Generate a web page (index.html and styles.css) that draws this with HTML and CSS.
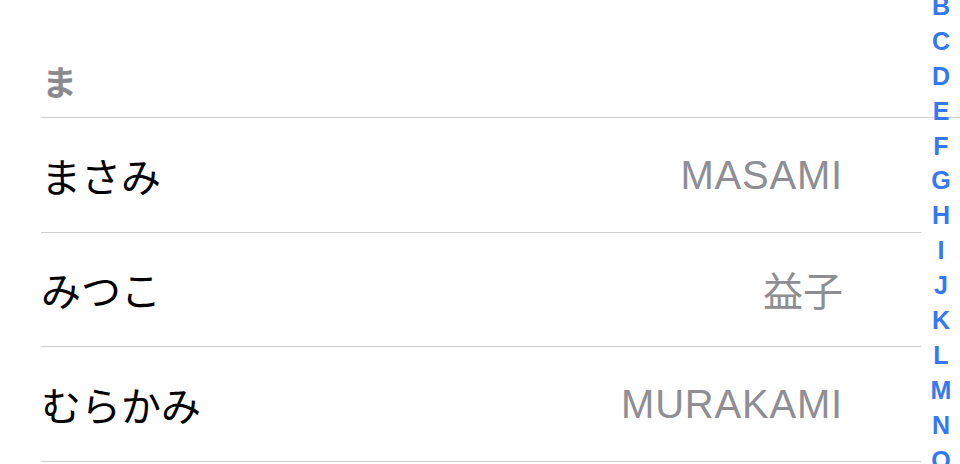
FILE: index.html
```html
<!DOCTYPE html>
<html lang="ja">
<head>
    <meta charset="UTF-8">
    <meta name="viewport" content="width=device-width, initial-scale=1.0">
    <title>連絡先</title>
    <link rel="stylesheet" href="styles.css">
</head>
<body>
    <div class="screen">
        <div class="list">
            <div class="section-header">ま</div>
            <div class="row">
                <span class="name">まさみ</span>
                <span class="detail">MASAMI</span>
            </div>
            <div class="row">
                <span class="name">みつこ</span>
                <span class="detail detail-kanji">益子</span>
            </div>
            <div class="row">
                <span class="name">むらかみ</span>
                <span class="detail">MURAKAMI</span>
            </div>
        </div>

        <ul class="index">
            <li>B</li>
            <li>C</li>
            <li>D</li>
            <li>E</li>
            <li>F</li>
            <li>G</li>
            <li>H</li>
            <li>I</li>
            <li>J</li>
            <li>K</li>
            <li>L</li>
            <li>M</li>
            <li>N</li>
            <li>O</li>
        </ul>
    </div>
</body>
</html>
```

FILE: styles.css
```css
body {
    margin: 0;
    padding: 0;
    background: #ffffff;
    font-family: "Liberation Sans", "Noto Sans CJK JP", sans-serif;
    overflow: hidden;
}
.screen {
    position: relative;
    width: 960px;
    height: 464px;
    overflow: hidden;
}
.list {
    padding-left: 41px;
}
.section-header {
    height: 118px;
    display: flex;
    align-items: flex-end;
    box-sizing: border-box;
    padding-bottom: 18px;
    padding-left: 1px;
    border-bottom: 1px solid #cfcfd3;
    font-family: "Noto Sans CJK JP", sans-serif;
    font-weight: bold;
    font-size: 35px;
    line-height: 36px;
    color: #8a8a8e;
}
.row {
    height: 114.5px;
    box-sizing: border-box;
    margin-right: 39px;
    padding-right: 78px;
    display: flex;
    align-items: center;
    justify-content: space-between;
    border-bottom: 1px solid #cfcfd3;
}
.name {
    font-family: "Noto Sans CJK JP", sans-serif;
    font-size: 40px;
    color: #000000;
}
.detail {
    font-family: "Liberation Sans", sans-serif;
    font-size: 40px;
    color: #8e8e93;
    letter-spacing: 0.8px;
    padding-top: 2px;
}
.detail-kanji {
    font-family: "Noto Sans CJK JP", sans-serif;
    font-size: 40px;
    letter-spacing: 0;
    padding-top: 0;
}
.index {
    position: absolute;
    top: -11px;
    right: 0;
    width: 38px;
    margin: 0;
    padding: 0;
    list-style: none;
    text-align: center;
}
.index li {
    height: 34.9px;
    line-height: 34.9px;
    font-size: 25px;
    font-weight: bold;
    color: #3478f6;
}
```
